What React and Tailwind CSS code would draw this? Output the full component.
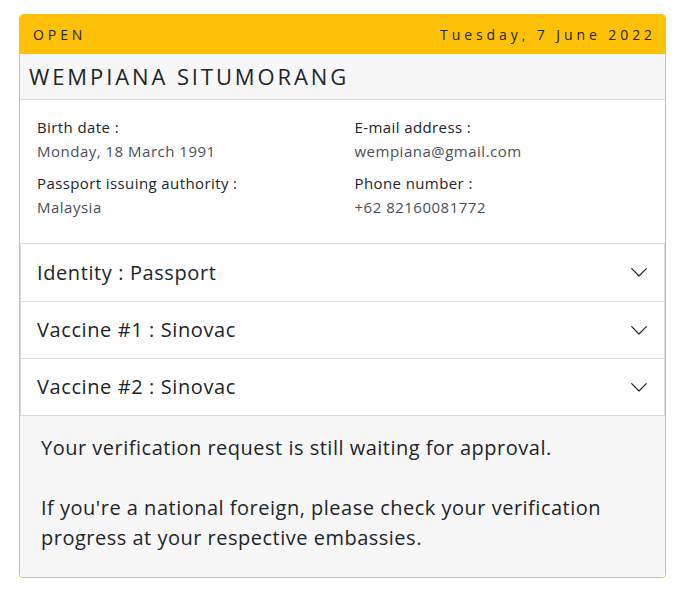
const details = [
  { label: "Birth date :", value: "Monday, 18 March 1991" },
  { label: "E-mail address :", value: "wempiana@gmail.com" },
  { label: "Passport issuing authority :", value: "Malaysia" },
  { label: "Phone number :", value: "+62 82160081772" },
];

const rows = [
  "Identity : Passport",
  "Vaccine #1 : Sinovac",
  "Vaccine #2 : Sinovac",
];

function Chevron() {
  return (
    <svg width="16" height="9" viewBox="0 0 16 9" fill="none">
      <polyline
        points="0.7,0.7 8,8 15.3,0.7"
        stroke="#212529"
        strokeWidth="1.2"
        strokeLinecap="round"
        strokeLinejoin="round"
      />
    </svg>
  );
}

export default function App() {
  return (
    <div
      className="min-h-screen bg-white pt-[14px] pl-[19px] pr-[33px] text-[#212529]"
      style={{ fontFamily: "'Open Sans', 'Noto Sans', sans-serif" }}
    >
      <div className="w-[647px] border border-[#ffc107] rounded-[4px] overflow-hidden">
        {/* HEADER */}
        <div className="flex justify-between items-center h-[39px] bg-[#ffc107] px-[13px] text-[14px] tracking-[0.28em]">
          <span>OPEN</span>
          <span className="-mr-[4px]">Tuesday, 7 June 2022</span>
        </div>

        {/* NAME */}
        <div className="h-[46px] flex items-center bg-[#f7f7f7] border-b border-[#dcdcdc] px-[9px] text-[22px] tracking-[2.9px]">
          WEMPIANA SITUMORANG
        </div>

        {/* DETAILS */}
        <div className="grid grid-cols-2 gap-x-4 gap-y-[8px] px-[17px] pt-[15px] pb-[24px] bg-white">
          {details.map((d, i) => (
            <div key={d.label} className={i % 2 === 1 ? "pl-[4px]" : ""}>
              <p className="text-[15px] leading-[24px] font-medium tracking-[0.4px]">{d.label}</p>
              <p className="text-[15px] leading-[24px] text-[#495057] tracking-[0.5px]">{d.value}</p>
            </div>
          ))}
        </div>

        {/* ACCORDION */}
        <div className="border border-[#dcdcdc]">
          {rows.map((r, i) => (
            <div
              key={r}
              className={
                "h-[57px] flex items-center justify-between pl-[16px] pr-[17px] bg-white" +
                (i > 0 ? " border-t border-[#dcdcdc]" : "")
              }
            >
              <span className="text-[20px] tracking-[0.6px]">{r}</span>
              <Chevron />
            </div>
          ))}
        </div>

        {/* FOOTER */}
        <div className="bg-[#f7f7f7] px-[21px] pt-[17px] pb-[24px] text-[20px] leading-[30px] tracking-[0.5px]">
          <p>Your verification request is still waiting for approval.</p>
          <p className="mt-[30px]">
            If you're a national foreign, please check your verification progress at your respective embassies.
          </p>
        </div>
      </div>
    </div>
  );
}
